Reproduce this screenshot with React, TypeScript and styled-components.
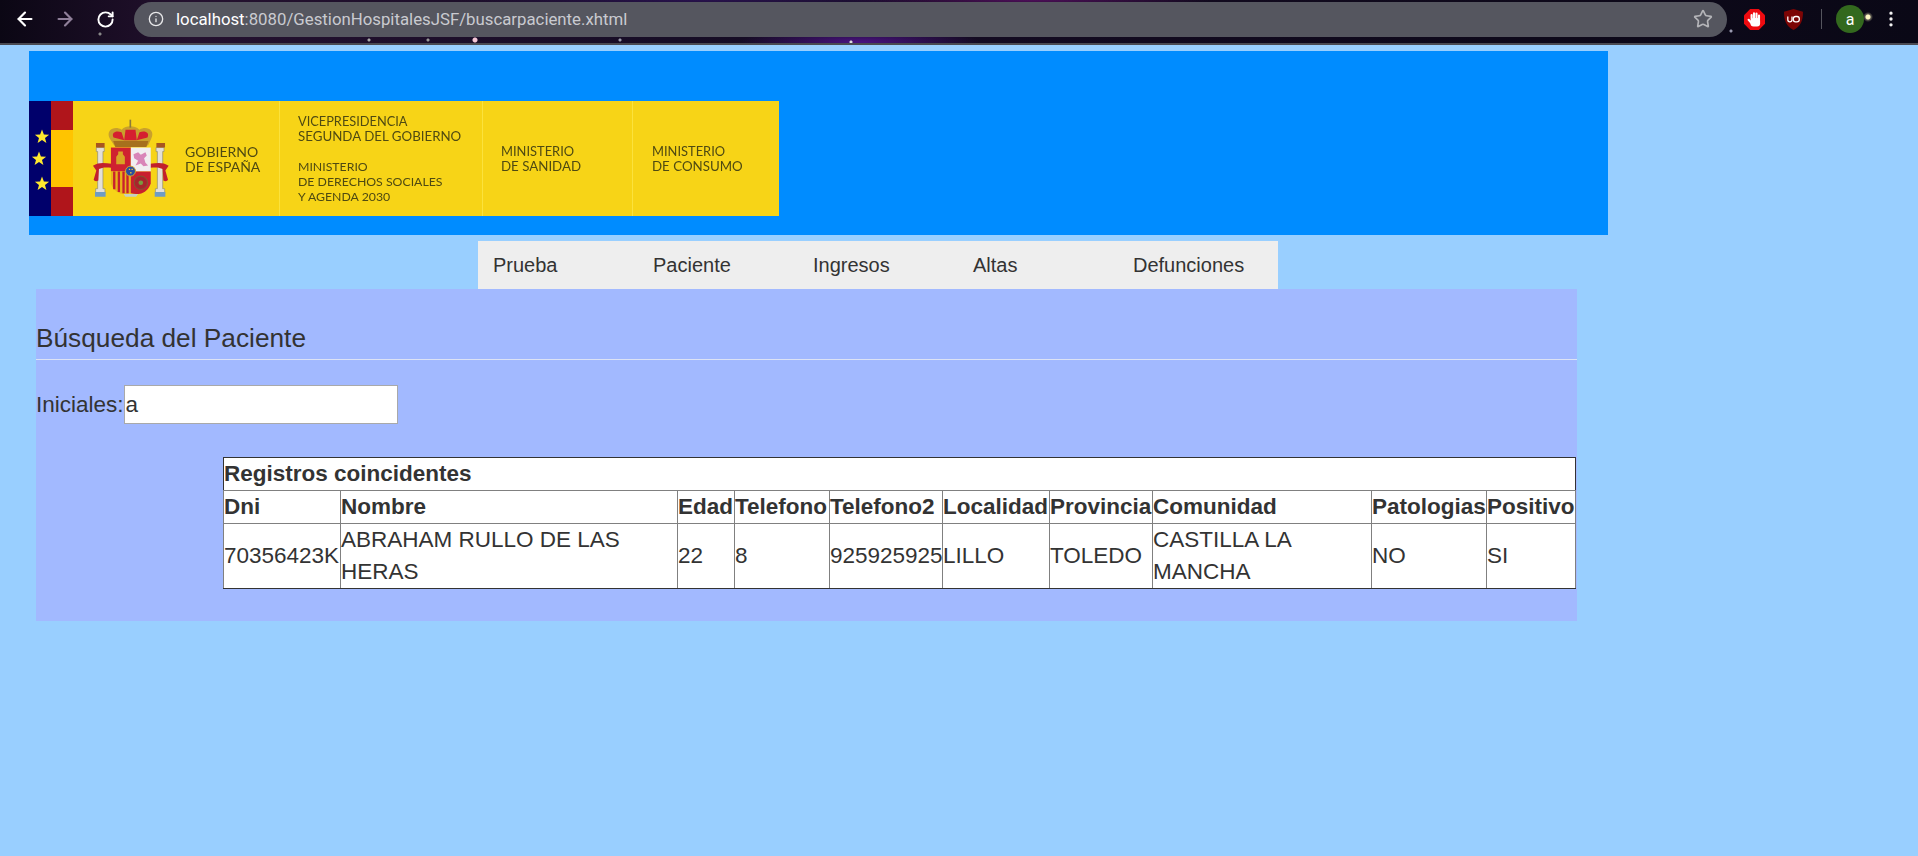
import { ArrowLeft, ArrowRight, RotateCw, Info, Star, MoreVertical } from 'lucide-react';
import styled, { createGlobalStyle } from 'styled-components';

const GlobalStyle = createGlobalStyle`
  html, body {
    margin: 0;
    padding: 0;
    background-color: #99cfff;
    color: #333;
    font-family: 'Liberation Sans', Arial, sans-serif;
  }
`;

const navItems = ['Prueba', 'Paciente', 'Ingresos', 'Altas', 'Defunciones'];

const columns = [
  { name: 'Dni', width: 117 },
  { name: 'Nombre', width: 337 },
  { name: 'Edad', width: 57 },
  { name: 'Telefono', width: 95 },
  { name: 'Telefono2', width: 113 },
  { name: 'Localidad', width: 107 },
  { name: 'Provincia', width: 103 },
  { name: 'Comunidad', width: 219 },
  { name: 'Patologias', width: 115 },
  { name: 'Positivo', width: 89 },
];

const patient = [
  '70356423K',
  'ABRAHAM RULLO DE LAS HERAS',
  '22',
  '8',
  '925925925',
  'LILLO',
  'TOLEDO',
  'CASTILLA LA MANCHA',
  'NO',
  'SI',
];

const euStars = [
  { x: 13, y: 36 },
  { x: 10, y: 58 },
  { x: 13, y: 83 },
];

const CoatOfArms = () => (
  <svg width='78' height='82' viewBox='215 62 235 245'>
    {/* pillars */}
    <path d='M228 150h24v12h-4v112h6v14h-28v-14h6V162h-4z' fill='#e4e0d8' stroke='#8d8a70' strokeWidth='2' />
    <path d='M408 150h24v12h-4v112h6v14h-28v-14h6V162h-4z' fill='#e4e0d8' stroke='#8d8a70' strokeWidth='2' />
    <path d='M227 136h26v14h-26zM409 136h26v14h-26z' fill='#a8551f' />
    <path d='M224 284h32v14h-32zM404 284h32v14h-32z' fill='#6f9cc4' />
    {/* ribbons */}
    <path d='M218 205c18-12 36-8 56-6v12c-18-2-28-2-38 4l-2 34c-6 4-12 2-14-2l8-28z' fill='#c2202c' />
    <path d='M446 205c-18-12-36-8-56-6v12c18-2 28-2 38 4l2 34c6 4 12 2 14-2l-8-28z' fill='#c2202c' />
    {/* crown */}
    <path d='M268 122c-12-26 16-38 36-26 8-8 16-10 26-10s20 2 28 10c20-12 48 0 36 26l-10 22H282z' fill='#c9a02c' />
    <path d='M280 120c-8-16 8-22 24-16l8 24zM382 120c8-16-8-22-24-16l-8 24zM316 96h30l4 32h-38z' fill='#d51f30' />
    <path d='M279 130h106l-6 18H285z' fill='#a6701d' />
    <path d='M328 66h5v24h-5z' fill='#8c7a3a' />
    {/* shield */}
    <path d='M272 150h60v72h-60z' fill='#cf2230' />
    <path d='M332 150h60v72h-60z' fill='#f1eef0' />
    <path d='M272 222h60v66c-30 8-52-6-60-30z' fill='#e8b21a' />
    <path d='M332 222h60v36c-8 24-30 38-60 30z' fill='#c9202e' />
    <path d='M282 222v54M296 222v62M310 222v66M322 222v66' stroke='#c9202e' strokeWidth='7' />
    <path d='M288 200v-22l6-8v-8h14v8l6 8v22z' fill='#d9a526' />
    <path d='M340 170l14-6 8 8 14-8 4 10-8 8 4 14 8 8-14 2-8-8-16 6 8-14-12-8z' fill='#d985b8' />
    <circle cx='362' cy='256' r='20' fill='#a9242c' stroke='#5d7a34' strokeWidth='2' />
    <circle cx='362' cy='256' r='7' fill='#7a9a3e' />
    <circle cx='331' cy='221' r='15' fill='#2b4f9e' stroke='#d4a62a' strokeWidth='3' />
    <path d='M326 214h4v4h-4zM334 214h4v4h-4zM330 224h4v4h-4z' fill='#e8c53a' />
    <path d='M310 290h44l-6 8h-32z' fill='#c4cfc2' />
  </svg>
);

const EuStars = () => (
  <svg width='22' height='115' viewBox='0 0 22 115'>
    <rect width='22' height='115' fill='#00006b' />
    {euStars.map(star => (
      <polygon
        key={star.y}
        transform={`translate(${star.x} ${star.y})`}
        points='0,-7.5 1.9,-2.4 7.1,-2.3 3,0.9 4.4,6 0,3.1 -4.4,6 -3,0.9 -7.1,-2.3 -1.9,-2.4'
        fill='#ffe92e'
      />
    ))}
  </svg>
);

const StopHand = () => (
  <svg width='21' height='21' viewBox='0 0 21 21'>
    <path d='M6.2 0h8.600L21 6.200v8.600L14.800 21H6.200L0 14.800V6.200z' fill='#ee0b10' />
    <path d='M7.600 10V6M10 10V4.300M12.500 10V4.600M15 10.500V6.500' stroke='#fff' strokeWidth='2.100' strokeLinecap='round' />
    <rect x='6.500' y='9' width='9.600' height='8.500' rx='3' fill='#fff' />
    <path d='M7.500 14L4.600 10.800' stroke='#fff' strokeWidth='2.100' strokeLinecap='round' />
  </svg>
);

const Shield = () => (
  <svg width='19' height='21' viewBox='0 0 19 21'>
    <path d='M9.500 0L19 2.800c0 8.700-2 14.500-9.500 18.200C2 17.300 0 11.500 0 2.800z' fill='#7c0505' />
    <path d='M3.800 7.500v3.300a2.100 2.100 0 0 0 4.200 0V7.500' fill='none' stroke='#fff' strokeWidth='1.300' />
    <rect x='9.300' y='7.500' width='6' height='5.400' rx='2.300' fill='none' stroke='#fff' strokeWidth='1.300' />
  </svg>
);

const App = () => {
  return (
    <>
      <GlobalStyle />
      <Toolbar>
        <NavIcon>
          <ArrowLeft size={22} color='#fff' strokeWidth={2.4} />
        </NavIcon>
        <NavIcon>
          <ArrowRight size={22} color='#8f7f99' strokeWidth={2.4} />
        </NavIcon>
        <NavIcon>
          <RotateCw size={19} color='#fff' strokeWidth={2.4} />
        </NavIcon>
        <Omnibox>
          <Info size={16} color='#e8e8ea' />
          <Url>
            <b>localhost</b>:8080/GestionHospitalesJSF/buscarpaciente.xhtml
          </Url>
          <Star size={20} color='#b4b4b8' />
        </Omnibox>
        <Extensions>
          <StopHand />
          <Shield />
          <Divider />
          <Avatar>a</Avatar>
          <MoreVertical size={20} color='#f2f2f2' />
        </Extensions>
      </Toolbar>

      <Banner>
        <Logo>
          <EuStars />
          <FlagStrip>
            <FlagRed />
            <FlagYellow />
            <FlagRed />
          </FlagStrip>
          <ArmsBlock>
            <CoatOfArms />
            <LogoText $size={14}>
              GOBIERNO
              <br />
              DE ESPAÑA
            </LogoText>
          </ArmsBlock>
          <MinistryBlock $width={203}>
            <LogoText>
              <LogoSmall $size={12.8}>VICEPRESIDENCIA</LogoSmall>
              <br />
              SEGUNDA DEL GOBIERNO
              <br />
              <br />
              <LogoSmall $size={12.3}>
                MINISTERIO
                <br />
                DE DERECHOS SOCIALES
                <br />Y AGENDA 2030
              </LogoSmall>
            </LogoText>
          </MinistryBlock>
          <MinistryBlock $width={150}>
            <LogoText>
              <LogoSmall $size={12.9}>MINISTERIO</LogoSmall>
              <br />
              DE SANIDAD
            </LogoText>
          </MinistryBlock>
          <MinistryBlock $width={147} $inset={19}>
            <LogoText>
              <LogoSmall $size={12.9}>MINISTERIO</LogoSmall>
              <br />
              DE CONSUMO
            </LogoText>
          </MinistryBlock>
        </Logo>
      </Banner>

      <Menu>
        {navItems.map(item => (
          <MenuItem key={item}>{item}</MenuItem>
        ))}
      </Menu>

      <Panel>
        <Title>Búsqueda del Paciente</Title>
        <SearchRow>
          <label htmlFor='iniciales'>Iniciales:</label>
          <SearchInput id='iniciales' defaultValue='a' />
        </SearchRow>
        <TableWrap>
          <Results>
            <colgroup>
              {columns.map(col => (
                <col key={col.name} width={col.width} />
              ))}
            </colgroup>
            <thead>
              <tr>
                <CaptionCell colSpan={columns.length}>Registros coincidentes</CaptionCell>
              </tr>
              <tr>
                {columns.map(col => (
                  <HeadCell key={col.name}>{col.name}</HeadCell>
                ))}
              </tr>
            </thead>
            <tbody>
              <tr>
                {patient.map(value => (
                  <Cell key={value}>{value}</Cell>
                ))}
              </tr>
            </tbody>
          </Results>
        </TableWrap>
      </Panel>
    </>
  );
};

const Toolbar = styled.div`
  display: flex;
  align-items: center;
  box-sizing: border-box;
  height: 45px;
  padding: 0 0 5px 5px;
  border-bottom: 2px solid #4a4a52;
  background:
    radial-gradient(circle at 1868px 17px, #fff9c4 0 2px, rgba(255, 249, 196, 0.35) 3px, transparent 5px),
    radial-gradient(circle at 1731px 31px, #9a9ab0 0 1px, transparent 2px),
    radial-gradient(circle at 369px 40px, #aaa 0 1px, transparent 2px),
    radial-gradient(circle at 428px 40px, #999 0 1px, transparent 2px),
    radial-gradient(circle at 475px 40px, #f4c6d6 0 2px, transparent 3px),
    radial-gradient(circle at 620px 40px, #99a 0 1px, transparent 2px),
    radial-gradient(circle at 851px 42px, #ddd 0 1px, transparent 2px),
    radial-gradient(circle at 100px 34px, #888 0 1px, transparent 2px),
    radial-gradient(ellipse 120px 14px at 860px 42px, #4a1280, transparent),
    radial-gradient(ellipse 180px 8px at 1030px 0, #4d0f58, transparent),
    radial-gradient(ellipse 240px 8px at 700px 0, #28124d, transparent),
    linear-gradient(90deg, #0b0714 0, #24112f 10%, #170d26 35%, #120a1f 60%, #0a0816 100%);
`;

const NavIcon = styled.span`
  display: flex;
  justify-content: center;
  width: 40px;
`;

const Omnibox = styled.div`
  display: flex;
  align-items: center;
  gap: 13px;
  box-sizing: border-box;
  width: 1593px;
  height: 35px;
  margin-left: 9px;
  padding: 0 14px;
  border-radius: 18px;
  background-color: #55565f;
`;

const Url = styled.span`
  flex: 1;
  margin-left: -1px;
  color: #c9cad0;
  font-family: Roboto, sans-serif;
  font-size: 16.8px;

  b {
    color: #fff;
    font-weight: 400;
  }
`;

const Extensions = styled.div`
  display: flex;
  align-items: center;
  margin-left: 17px;

  svg:nth-child(2) {
    margin-left: 19px;
  }

  svg:last-child {
    margin-left: 17px;
  }
`;

const Divider = styled.span`
  width: 1px;
  height: 20px;
  margin: 0 14px 0 18px;
  background-color: #55555e;
`;

const Avatar = styled.span`
  display: flex;
  align-items: center;
  justify-content: center;
  width: 28px;
  height: 28px;
  border-radius: 50%;
  background-color: #33691e;
  color: #fff;
  font-family: Roboto, sans-serif;
  font-size: 16px;
`;

const Banner = styled.div`
  box-sizing: border-box;
  width: 1579px;
  height: 184px;
  margin: 6px 0 0 29px;
  padding-top: 50px;
  background-color: #008cff;
`;

const Logo = styled.div`
  display: flex;
  width: 750px;
  height: 115px;
  background-color: #f7d417;
  filter: blur(0.35px);

  svg {
    display: block;
    flex-shrink: 0;
  }
`;

const FlagStrip = styled.div`
  display: flex;
  flex-direction: column;
  width: 22px;
`;

const FlagRed = styled.div`
  height: 29px;
  background-color: #b0151b;
`;

const FlagYellow = styled.div`
  flex: 1;
  background-color: #ffc400;
`;

const ArmsBlock = styled.div`
  display: flex;
  align-items: center;
  gap: 15px;
  width: 206px;
  padding-left: 19px;
  box-sizing: border-box;
`;

const MinistryBlock = styled.div<{ $width: number; $inset?: number }>`
  display: flex;
  align-items: center;
  box-sizing: border-box;
  width: ${props => props.$width}px;
  padding-left: ${props => props.$inset ?? 18}px;
  border-left: 1px solid #fbe23d;
`;

const LogoText = styled.div<{ $size?: number }>`
  color: #4f4a12;
  font-family: Lato, sans-serif;
  font-size: ${props => props.$size ?? 13.3}px;
  line-height: 15px;
  white-space: nowrap;
`;

const LogoSmall = styled.span<{ $size: number }>`
  font-size: ${props => props.$size}px;
`;

const Menu = styled.ul`
  display: flex;
  width: 800px;
  margin: 6px 0 0 478px;
  padding: 0;
  list-style: none;
  background-color: #eee;
`;

const MenuItem = styled.li`
  box-sizing: border-box;
  width: 160px;
  padding: 0 15px;
  color: #333;
  font-size: 20px;
  line-height: 48px;
`;

const Panel = styled.div`
  box-sizing: border-box;
  width: 1541px;
  height: 332px;
  margin-left: 36px;
  background-color: #a2b9ff;
`;

const Title = styled.h3`
  margin: 0;
  padding: 31px 0 3px;
  border-bottom: 1px solid #dde3f5;
  color: #333;
  font-size: 26.25px;
  font-weight: 400;
  line-height: 36px;
`;

const SearchRow = styled.div`
  display: flex;
  align-items: center;
  margin-top: 25px;
  font-size: 22.5px;
`;

const SearchInput = styled.input`
  box-sizing: border-box;
  width: 274px;
  height: 39px;
  padding: 0 1px;
  border: 1px solid #a9a9a9;
  outline: none;
  background-color: #fff;
  color: #333;
  font-family: 'Liberation Sans', Arial, sans-serif;
  font-size: 22.5px;
`;

const TableWrap = styled.div`
  margin: 33px 0 0 187px;
`;

const Results = styled.table`
  box-sizing: border-box;
  width: 1352px;
  table-layout: fixed;
  border-collapse: collapse;
  border: 1px solid #333;
  background-color: #fff;
  font-size: 22.5px;
  line-height: 32px;
`;

const CaptionCell = styled.th`
  padding: 0;
  border: 1px solid #808080;
  border-color: #333 #333 #808080;
  text-align: left;
`;

const HeadCell = styled.th`
  padding: 0;
  border: 1px solid #808080;
  text-align: left;
  white-space: nowrap;
`;

const Cell = styled.td`
  padding: 0;
  border: 1px solid #808080;
  border-bottom-color: #333;
`;

export default App;
